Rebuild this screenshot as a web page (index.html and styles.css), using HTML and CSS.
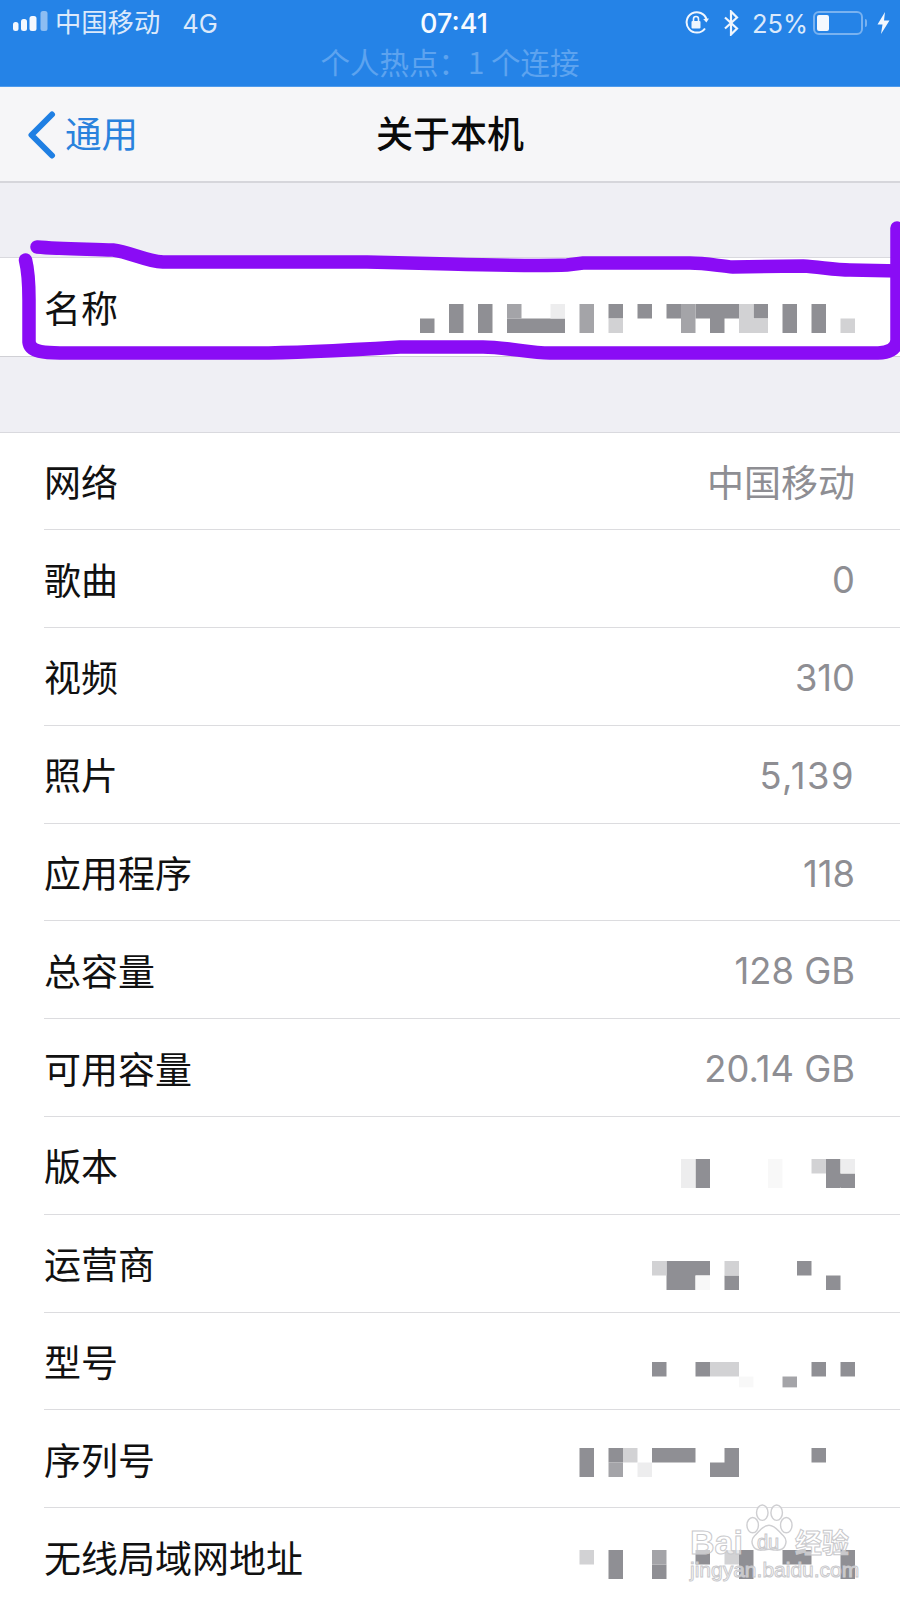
FILE: index.html
```html
<!DOCTYPE html>
<html lang="zh">
<head>
<meta charset="utf-8">
<title>关于本机</title>
<link rel="stylesheet" href="styles.css">
</head>
<body>
<div class="phone">
  <header class="status">
    <div class="status-row">
      <div class="status-left">
        <svg class="signal" width="36" height="24" viewBox="0 0 36 24"><rect x="0" y="11" width="5.500" height="9" rx="2.500" fill="#f4f8fe"/><rect x="8" y="8" width="6" height="12" rx="2.500" fill="#f4f8fe"/><rect x="16.500" y="5" width="7" height="15" rx="2.500" fill="#f4f8fe"/><rect x="27.500" y="0" width="7" height="20" rx="2.500" fill="#8dbdf2"/></svg>
        <span class="carrier">中国移动</span>
        <span class="net">4G</span>
      </div>
      <div class="time">07:41</div>
      <div class="status-right">
        <svg class="lock" width="26" height="24" viewBox="0 0 26 24" fill="none"><path d="M21 17.500A10.200 10.200 0 1 1 22.600 8.500" stroke="#f0f6fe" stroke-width="2"/><path d="M25 7.500l-2.600 4-3.200-3.600z" fill="#f0f6fe"/><rect x="7.500" y="10" width="9" height="7.500" rx="1" fill="#f0f6fe"/><path d="M9.500 10V8a2.500 2.500 0 0 1 5 0v2" stroke="#f0f6fe" stroke-width="1.600"/></svg>
        <svg class="bt" width="17" height="26" viewBox="0 0 17 26" fill="none"><path d="M2 7.500l12 11-6 6V1.500l6 6-12 11" stroke="#f0f6fe" stroke-width="2.200"/></svg>
        <span class="pct">25%</span>
        <div class="battery"><span class="battery-fill"></span></div>
        <span class="nub"></span>
        <svg class="bolt" width="13" height="24" viewBox="0 0 13 24"><path d="M8 1L0.500 13.500h5L4 23 12.500 9.500h-5.500z" fill="#f4f8fe"/></svg>
      </div>
    </div>
    <div class="hotspot">个人热点：1 个连接</div>
  </header>

  <nav class="nav">
    <div class="back">
      <svg class="chevron" width="30" height="48" viewBox="0 0 30 48" fill="none"><path d="M25 3.500L4.500 24l20.500 20.500" stroke="#1f7fe3" stroke-width="6" stroke-linecap="round" stroke-linejoin="round"/></svg>
      <span class="back-text">通用</span>
    </div>
    <div class="title">关于本机</div>
  </nav>

  <div class="gap"></div>

  <section class="group group-name">
    <div class="row"><div class="row-inner last">
      <span class="label">名称</span>
      <svg class="mosaic m-name" width="435" height="29" viewBox="0 0 30 2">
        <path class="d" d="M0 1h1v1H0zM2 0h1v2H2zM4 0h1v2H4zM6 1h4v1H6zM13 0h1v1h-1zM15 0h1v1h-1zM17 0h1v1h-1zM19 0h3v1h-3zM20 1h1v1h-1zM23 0h1v1h-1zM25 0h1v2h-1zM27 0h1v2h-1z"/>
        <path class="m" d="M6 0h1v1H6zM11 0h1v2h-1zM18 0h1v2h-1z"/>
        <path class="l" d="M13 1h1v1h-1zM22 0h1v2h-1zM23 1h1v1h-1zM29 1h1v1h-1z"/>
        <path class="x" d="M9 0h1v1H9z"/>
      </svg>
    </div></div>
  </section>

  <div class="gap gap-b"></div>

  <section class="group">
    <div class="row"><div class="row-inner"><span class="label">网络</span><span class="value">中国移动</span></div></div>
    <div class="row"><div class="row-inner"><span class="label">歌曲</span><span class="value num">0</span></div></div>
    <div class="row"><div class="row-inner"><span class="label">视频</span><span class="value num">310</span></div></div>
    <div class="row"><div class="row-inner"><span class="label">照片</span><span class="value num spaced">5,139</span></div></div>
    <div class="row"><div class="row-inner"><span class="label">应用程序</span><span class="value num">118</span></div></div>
    <div class="row"><div class="row-inner"><span class="label">总容量</span><span class="value num">128 GB</span></div></div>
    <div class="row"><div class="row-inner"><span class="label">可用容量</span><span class="value num">20.14 GB</span></div></div>
    <div class="row"><div class="row-inner">
      <span class="label">版本</span>
      <svg class="mosaic m-ver" width="435" height="29" viewBox="0 0 30 2">
        <path class="d" d="M19 0h1v2h-1zM28 0h1v2h-1zM29 1h1v1h-1z"/>
        <path class="l" d="M27 0h1v1h-1z"/>
        <path class="x" d="M18 0h1v2h-1zM29 0h1v1h-1z"/>
        <path class="y" d="M24 0h1v2h-1z"/>
      </svg>
    </div></div>
    <div class="row"><div class="row-inner">
      <span class="label">运营商</span>
      <svg class="mosaic m-op" width="435" height="29" viewBox="0 0 30 2">
        <path class="d" d="M17 0h3v1h-3zM17 1h2v1h-2zM21 1h1v1h-1zM26 0h1v1h-1zM28 1h1v1h-1z"/>
        <path class="l" d="M16 0h1v1h-1zM21 0h1v1h-1z"/>
        <path class="y" d="M19 1h1v1h-1z"/>
      </svg>
    </div></div>
    <div class="row"><div class="row-inner">
      <span class="label">型号</span>
      <svg class="mosaic m-model" width="435" height="29" viewBox="0 0 30 2">
        <path class="d" d="M16 0h1v1h-1zM19 0h1v1h-1zM27 0h1v1h-1zM29 0h1v1h-1z"/>
        <path class="m" d="M25 1h1v.75h-1z"/>
        <path class="l" d="M20 0h2v1h-2z"/>
        <path class="y" d="M22 1h1v.75h-1z"/>
      </svg>
    </div></div>
    <div class="row"><div class="row-inner">
      <span class="label">序列号</span>
      <svg class="mosaic m-serial" width="435" height="29" viewBox="0 0 30 2">
        <path class="d" d="M11 0h1v2h-1zM13 0h1v1h-1zM16 0h3v1h-3zM21 0h1v2h-1zM20 1h1v1h-1zM27 0h1v1h-1z"/>
        <path class="m" d="M13 1h1v1h-1z"/>
        <path class="l" d="M14 0h1v1h-1z"/>
        <path class="x" d="M15 1h1v1h-1z"/>
      </svg>
    </div></div>
    <div class="row"><div class="row-inner">
      <span class="label">无线局域网地址</span>
      <svg class="mosaic m-wifi" width="435" height="29" viewBox="0 0 30 2">
        <path class="d" d="M13 0h1v2h-1zM16 1h1v1h-1zM19 0h1v1h-1zM22 0h1v2h-1zM25 0h2v1h-2zM29 0h1v2h-1z"/>
        <path class="m" d="M16 0h1v1h-1z"/>
        <path class="l" d="M11 0h1v1h-1zM21 0h1v1h-1z"/>
      </svg>
    </div></div>
  </section>

  <svg class="scribble" width="900" height="400" viewBox="0 0 900 400" fill="none">
    <path d="M37 247C60 249 90 249 113 250C130 252 145 261 163 262L367 262L450 264C490 265 540 266 567 265L583 263L690 263C705 263 720 266 733 267L803 266C820 267 835 270 850 270L900 271" stroke="#8a0cf5" stroke-width="13.500" stroke-linecap="round"/>
    <path d="M897 228V340C897 349 888 353 878 353L823 353L550 353C530 353 505 347 483 347L400 347C350 350 300 353 257 353L117 353L60 353C45 353 30 352 29 342L29 300C29 285 28 270 25.500 260" stroke="#8a0cf5" stroke-width="13.500" stroke-linecap="round" stroke-linejoin="round"/>
  </svg>

  <div class="watermark">
    <svg class="paw" width="48" height="52" viewBox="0 0 50 52" fill="none"><g stroke="#cfcfd2" stroke-width="1.500" fill="rgba(255,255,255,.55)"><ellipse cx="8" cy="22" rx="6" ry="8"/><ellipse cx="18" cy="9" rx="6" ry="8"/><ellipse cx="33" cy="9" rx="6" ry="8"/><ellipse cx="43" cy="22" rx="6" ry="8"/><path d="M25 22c-7 0-10 7-15 11-5 5-3 16 8 15 4 0 5-1 7-1s3 1 7 1c11 1 13-10 8-15-5-4-8-11-15-11z"/></g></svg>
    <div class="wm-top"><span>Bai</span><span class="wm-du">du</span><span class="wm-cn">经验</span></div>
    <div class="wm-url">jingyan.baidu.com</div>
  </div>
</div>
</body>
</html>
```

FILE: styles.css
```css
* { box-sizing: border-box; }
html, body { margin: 0; padding: 0; height: 1600px; overflow: hidden; background: #fff; }
.phone {
  position: relative;
  width: 900px;
  height: 1600px;
  overflow: hidden;
  background: #efeff4;
  font-family: "Inter", "Noto Sans CJK SC", sans-serif;
}
.status {
  height: 87px;
  background: #2583e7;
  color: #f0f6fe;
  border-bottom: 1px solid #4f9bec;
}
.status-row {
  display: grid;
  grid-template-columns: 1fr auto 1fr;
  align-items: center;
  height: 46px;
  padding: 0 10px 0 13px;
}
.status-left { display: flex; align-items: center; }
.signal { margin-right: 6px; }
.carrier {
  font-size: 26.300px;
  line-height: 32px;
  margin-top: -5px;
  font-family: "Noto Sans CJK SC", sans-serif;
  color: #dbe9fb;
}
.net { font-size: 25.500px; margin-left: 22px; color: #dbe9fb; }
.time { font-size: 27px; font-weight: 500; margin-left: 5px; color: #f6faff; }
.status-right { display: flex; align-items: center; justify-content: flex-end; }
.lock { margin-right: 13px; }
.bt { margin-right: 12px; }
.pct { font-size: 25.500px; margin-right: 5px; color: #dbe9fb; }
.battery {
  width: 50px;
  height: 24px;
  border: 2px solid #79b2f0;
  border-radius: 6px;
  padding: 2px;
}
.battery-fill { display: block; width: 12px; height: 100%; background: #f4f8fe; border-radius: 2px; }
.nub { width: 2px; height: 8px; margin-left: 2px; background: #79b2f0; border-radius: 0 2px 2px 0; }
.bolt { margin-left: 10px; }
.hotspot {
  text-align: center;
  font-size: 29.500px;
  line-height: 30px;
  color: #5da3ef;
  font-family: "Noto Sans CJK SC", sans-serif;
}
.nav {
  height: 96px;
  background: #f6f6f8;
  border-bottom: 2px solid #d6d6db;
  display: grid;
  grid-template-columns: 1fr auto 1fr;
  align-items: center;
  padding: 0 27px;
}
.back {
  display: flex;
  align-items: center;
  gap: 8px;
  color: #2a82dd;
  font-size: 36.500px;
  font-family: "Noto Sans CJK SC", sans-serif;
}
.chevron { margin-top: 2px; }
.back-text { margin-top: -4px; }
.title {
  font-size: 37px;
  font-weight: 500;
  line-height: 46px;
  margin-top: -4px;
  color: #0a0a0a;
  font-family: "Noto Sans CJK SC", sans-serif;
}
.gap { height: 75px; border-bottom: 1px solid #d9d9de; }
.gap-b { height: 75.500px; }
.group { background: #fff; }
.group-name { border-bottom: 1px solid #d0d0d5; }
.row { padding-left: 44px; height: 97.800px; }
.group-name .row { height: 98px; }
.row-inner {
  display: flex;
  align-items: center;
  height: 100%;
  padding-right: 45px;
  border-bottom: 1.500px solid #dcdcdf;
}
.row-inner.last { border-bottom: 0; }
.label {
  font-size: 37px;
  color: #111;
  font-family: "Noto Sans CJK SC", sans-serif;
  white-space: nowrap;
}
.value {
  margin-left: auto;
  font-size: 37px;
  color: #8e8e93;
  white-space: nowrap;
  font-family: "Noto Sans CJK SC", sans-serif;
}
.value.num {
  font-family: "Inter", sans-serif;
  font-size: 36.300px;
  padding-top: 3px;
}
.value.spaced { letter-spacing: 1.500px; }
.mosaic { margin-left: auto; align-self: flex-start; flex: none; }
.m-name { margin-top: 46px; }
.m-ver { margin-top: 42px; }
.m-op { margin-top: 46px; }
.m-model { margin-top: 49px; }
.m-serial { margin-top: 38px; }
.m-wifi { margin-top: 42px; }
.mosaic .d { fill: #8f8f94; }
.mosaic .m { fill: #a4a4a8; }
.mosaic .l { fill: #d2d2d4; }
.mosaic .x { fill: #ededee; }
.mosaic .y { fill: #f8f8f8; }
.scribble { position: absolute; left: 0; top: 0; pointer-events: none; }
.watermark {
  position: absolute;
  left: 690px;
  top: 1503px;
  width: 175px;
  height: 90px;
  color: rgba(255, 255, 255, .55);
  -webkit-text-stroke: 1px #c9c9cc;
}
.paw { position: absolute; left: 55px; top: 0; }
.wm-top {
  position: absolute;
  left: 0;
  top: 20px;
  display: flex;
  align-items: center;
  font-size: 34px;
  line-height: 38px;
  font-family: "Liberation Sans", sans-serif;
  font-weight: 700;
  white-space: nowrap;
}
.wm-du { margin-left: 14px; font-size: 20px; width: 38px; font-weight: 400; }
.wm-cn { font-size: 27px; font-family: "Noto Sans CJK SC", sans-serif; }
.wm-url {
  position: absolute;
  left: 0;
  top: 52px;
  font-size: 21px;
  line-height: 30px;
  font-family: "Liberation Sans", sans-serif;
  white-space: nowrap;
}
```
